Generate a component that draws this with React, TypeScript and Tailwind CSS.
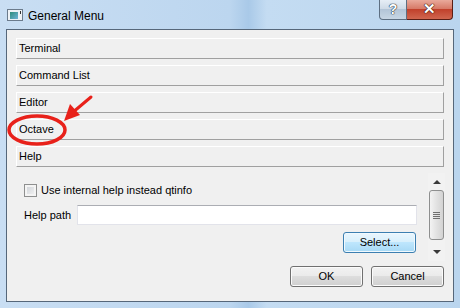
import React from 'react'

const sections = ['Terminal', 'Command List', 'Editor', 'Octave', 'Help']

const SectionHeader = ({ label }: { label: string }) => (
  <div className="flex h-[21px] items-center border border-white border-r-[#a0a0a0] border-b-[#a0a0a0] bg-[#f0f0f0] pl-[2px]">
    {label}
  </div>
)

const PushButton = ({ label, hot }: { label: string; hot?: boolean }) => (
  <div
    className={
      hot
        ? 'flex h-[21px] w-[73px] items-center justify-center rounded-[3px] border border-[#3c7fb1] bg-[linear-gradient(#eaf6fd_0%,#d9f0fc_45%,#bee6fd_50%,#a7d9f5_100%)] shadow-[inset_0_0_0_1px_#f0f9fe]'
        : 'flex h-[21px] w-[73px] items-center justify-center rounded-[3px] border border-[#707070] bg-[linear-gradient(#f2f2f2_0%,#ebebeb_45%,#dddddd_50%,#cfcfcf_100%)] shadow-[inset_0_0_0_1px_#fbfbfb]'
    }
  >
    {label}
  </div>
)

const ScrollBar = () => (
  <div className="flex w-[17px] flex-col items-center bg-[#f2f2f2]">
    <div className="flex h-[17px] w-full items-center justify-center pt-[1px]">
      <div className="h-0 w-0 border-x-[4px] border-b-[4px] border-x-transparent border-b-[#3a3a3a]" />
    </div>
    <div className="flex h-[50px] w-[15px] items-center justify-center rounded-[3px] border border-[#8e8f8f] bg-[linear-gradient(90deg,#f3f3f3,#e2e2e2_50%,#d3d3d3)]">
      <div className="flex flex-col gap-[1px]">
        <div className="h-[1px] w-[7px] bg-[#6f6f6f]" />
        <div className="h-[1px] w-[7px] bg-[#6f6f6f]" />
        <div className="h-[1px] w-[7px] bg-[#6f6f6f]" />
        <div className="h-[1px] w-[7px] bg-[#6f6f6f]" />
      </div>
    </div>
    <div className="flex-1" />
    <div className="flex h-[17px] w-full items-center justify-center pb-[2px]">
      <div className="h-0 w-0 border-x-[4px] border-t-[4px] border-x-transparent border-t-[#3a3a3a]" />
    </div>
  </div>
)

export default function App() {
  return (
    <div className="relative h-[308px] w-[460px] overflow-hidden bg-[linear-gradient(90deg,#c9def3_0%,#bcd6ef_50%,#a9c9e8_54%,#c4dcf2_58%,#bad5ee_100%)] font-['Segoe_UI','Liberation_Sans',sans-serif] text-[11px] text-black">
      <div className="flex h-[29px] items-start">
        <div className="ml-[7px] mt-[9px] flex h-[12px] w-[16px] items-center border border-[#6b7b8c] bg-[#eef2f6] pl-[2px]">
          <div className="h-[7px] w-[8px] bg-[linear-gradient(135deg,#2e8c7c,#6fb3d8)]" />
          <div className="ml-[2px] mt-[1px] h-[3px] w-[1px] self-start bg-[#333]" />
        </div>
        <div className="ml-[5px] mt-[7px] text-[12px] text-black">General Menu</div>
        <div className="flex-1" />
        <div className="flex h-[20px] w-[28px] items-center justify-center rounded-bl-[4px] border border-t-0 border-[#5d6f82] bg-[linear-gradient(#e6eef6_0%,#cfdbe7_45%,#b3c5d7_50%,#c7d6e4_100%)] text-[14px] font-bold text-white [text-shadow:0_0_1px_#1c2a38,0_0_1px_#1c2a38,0_0_1px_#1c2a38]">
          ?
        </div>
        <div className="mr-[7px] flex h-[20px] w-[46px] items-center justify-center rounded-br-[4px] border border-l-0 border-t-0 border-[#5a1e15] bg-[linear-gradient(#e9a99b_0%,#d77a68_45%,#c1412c_50%,#d0664f_100%)] text-[15px] font-bold text-white [text-shadow:0_0_1px_#3a120a,0_0_1px_#3a120a,0_0_1px_#3a120a]">
          ✕
        </div>
      </div>

      <div className="mx-[6px] flex h-[273px] flex-col border border-[#56677a] bg-[#f0f0f0] px-[9px] pt-[8px]">
        <div className="flex flex-col gap-[6px]">
          {sections.map((s) => (
            <SectionHeader key={s} label={s} />
          ))}
        </div>

        <div className="mr-[-1px] mt-[6px] flex h-[88px]">
          <div className="flex flex-1 flex-col pl-[8px] pr-[11px] pt-[11px]">
            <div className="flex h-[13px] items-center gap-[4px]">
              <div className="h-[13px] w-[13px] border border-[#8e8f8f] bg-[linear-gradient(135deg,#cbcfd5,#f6f6f6)] shadow-[inset_0_0_0_2px_#f4f4f4]" />
              <span>Use internal help instead qtinfo</span>
            </div>
            <div className="mt-[8px] flex h-[20px] items-center">
              <span className="w-[53px]">Help path</span>
              <div className="h-[20px] flex-1 border border-[#e2e3ea] border-t-[#abadb3] bg-white" />
            </div>
            <div className="mt-[7px] flex justify-end pr-[1px]">
              <PushButton label="Select..." hot />
            </div>
          </div>
          <ScrollBar />
        </div>

        <div className="mt-[5px] flex justify-end gap-[8px]">
          <PushButton label="OK" />
          <PushButton label="Cancel" />
        </div>
      </div>

      <svg className="pointer-events-none absolute left-0 top-0" width="460" height="308">
        <ellipse cx="37" cy="130" rx="28" ry="14" fill="none" stroke="#e8211a" strokeWidth="3.5" />
        <line x1="91" y1="97" x2="72" y2="113" stroke="#e8211a" strokeWidth="3" strokeLinecap="round" />
        <polygon points="64,121 70,104 80,115" fill="#e8211a" />
      </svg>
    </div>
  )
}
